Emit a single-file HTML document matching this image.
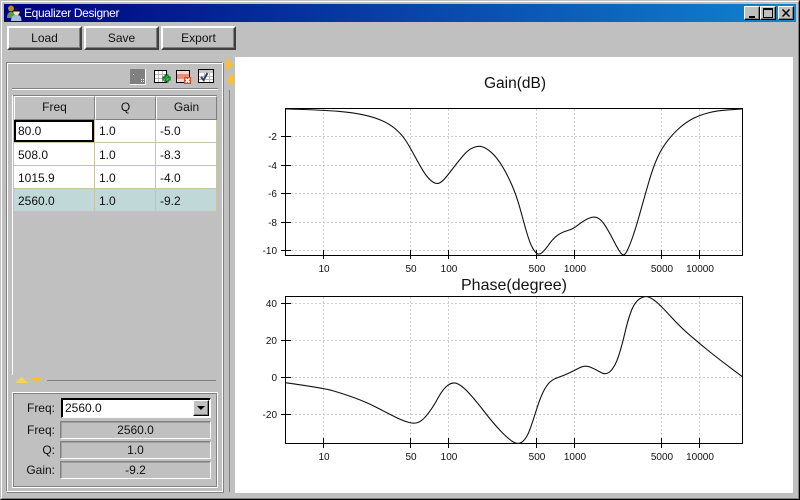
<!DOCTYPE html>
<html><head><meta charset="utf-8"><style>
html,body{margin:0;padding:0;background:#c0c0c0}
#w{position:relative;width:800px;height:500px;overflow:hidden;background:#c0c0c0;font:12px "Liberation Sans",sans-serif;color:#111}
#w div{position:absolute;box-sizing:border-box}
.btn{background:#c0c0c0;border:2px solid;border-color:#fff #404040 #404040 #fff;box-shadow:inset -1px -1px 0 #808080;text-align:center;line-height:20px}
.wb{background:#c0c0c0;border:1px solid;border-color:#fff #000 #000 #fff;box-shadow:inset -1px -1px 0 #808080}
.h{background:#c0c0c0;border:1px solid;border-color:#fff #808080 #808080 #fff;text-align:center;line-height:21px;top:96px;height:24px}
.c{height:22px;line-height:24px;padding-left:4px;background:#fff}
.sel{background:#c0d8d8}
.l{left:12px;width:43px;text-align:right;height:18px;line-height:18px}
.f{left:60px;width:151px;height:18px;line-height:17px;text-align:center;border:1px solid;border-color:#808080 #fff #fff #808080;box-shadow:inset 1px 1px 0 #a0a0a0}
</style></head><body><div id="w">
<div style="left:0;top:0;width:800px;height:500px;border:1px solid;border-color:#c0c0c0 #000 #000 #c0c0c0"></div>
<div style="left:1px;top:1px;width:798px;height:498px;border:1px solid;border-color:#fff #808080 #808080 #fff"></div>
<div style="left:4px;top:4px;width:792px;height:18px;background:linear-gradient(90deg,#000080,#1084d0);color:#fff;line-height:18px;padding-left:20px;letter-spacing:-0.35px">Equalizer Designer</div>
<svg style="position:absolute;left:6px;top:4px" width="16" height="17"><circle cx="5" cy="4.500" r="3" fill="#b08a20"/><path d="M1 14c0-5 2-6 4-6s4 1 4 6z" fill="#5c9a38"/><circle cx="10.500" cy="8" r="3.200" fill="#f4e0c8"/><path d="M7 7.500c0-3.500 7-3.500 7 0z" fill="#101018"/><path d="M5 17c0-5 2.500-6 5.500-6s5 1 5 6z" fill="#a4bcd8"/></svg>
<div class="wb" style="left:744px;top:6px;width:16px;height:14px"><div style="left:4px;top:9px;width:6px;height:2px;background:#000"></div></div>
<div class="wb" style="left:760px;top:6px;width:16px;height:14px"><div style="left:2px;top:1px;width:10px;height:10px;border:1px solid #000;border-top-width:2px"></div></div>
<div class="wb" style="left:778px;top:6px;width:16px;height:14px"><svg style="position:absolute;left:3px;top:2px" width="9" height="9"><path d="M0.500 0.500L7.500 7.500M7.500 0.500L0.500 7.500" stroke="#000" stroke-width="1.500"/></svg></div>

<div class="btn" style="left:7px;top:26px;width:75px;height:24px">Load</div>
<div class="btn" style="left:84px;top:26px;width:75px;height:24px">Save</div>
<div class="btn" style="left:161px;top:26px;width:75px;height:24px">Export</div>

<div style="left:6px;top:62px;width:217px;height:430px;border:1px solid;border-color:#808080 #fff #fff #808080;box-shadow:1px 1px 0 #808080,inset 1px 1px 0 #fff"></div>

<svg style="position:absolute;left:128px;top:66px" width="66" height="20" shape-rendering="crispEdges">
<rect x="2" y="3" width="15" height="15" fill="#808080"/><path d="M17.500 3v15.500H2" fill="none" stroke="#fff"/><rect x="5" y="8" width="1" height="1" fill="#fff"/><rect x="13" y="13" width="1" height="1" fill="#fff"/><rect x="15" y="15" width="1" height="1" fill="#fff"/><rect x="13" y="15" width="1" height="1" fill="#fff"/><rect x="15" y="13" width="1" height="1" fill="#fff"/>
<rect x="26.500" y="4.500" width="12" height="12" fill="#fff" stroke="#000"/><path d="M27 8.500h11M27 12.500h11M30.500 5v11M34.500 5v11" stroke="#bbb"/>
<path d="M35 11h2v-2h2v2h2v2h-2v2h-2v-2h-2z" fill="#10b030"/><path d="M35 11h2v-2h3v2h2v3h-2v2h-3v-2h-2z" fill="none" stroke="#005010"/>
<rect x="48.500" y="4.500" width="13" height="12" fill="#f4d8d0" stroke="#000"/><rect x="49" y="8" width="12" height="5" fill="#e89080"/>
<rect x="56" y="11" width="7" height="7" fill="#e84020"/><path d="M57.500 12.500l4 4M61.500 12.500l-4 4" stroke="#fff" stroke-width="1.600" shape-rendering="auto"/>
</svg>
<svg style="position:absolute;left:196px;top:66px" width="20" height="20" shape-rendering="crispEdges"><rect x="2.500" y="3.500" width="15" height="13" fill="#fff" stroke="#000"/><rect x="3" y="4" width="14" height="3" fill="#c8c8c8"/><path d="M3 10.500h14M3 13.500h14M8.500 7v9M13.500 7v9" stroke="#bbb"/><path d="M5 11l2.500 3 4-7" fill="none" stroke="#304060" stroke-width="2" shape-rendering="auto"/></svg>

<div style="left:12px;top:88px;width:206px;height:2px;background:#808080;border-bottom:1px solid #fff"></div>
<div style="left:12px;top:95px;width:1px;height:280px;background:#fff"></div>
<div style="left:13px;top:95px;width:204px;height:1px;background:#808080"></div>

<div class="h" style="left:14px;width:81px">Freq</div>
<div class="h" style="left:95px;width:61px">Q</div>
<div class="h" style="left:156px;width:61px">Gain</div>
<div style="left:14px;top:120px;width:203px;height:92px;background:#c8c4a8"></div>
<div class="c" style="left:14px;top:120px;width:80px;border:2px solid #000;padding-left:2px;line-height:19px">80.0</div>
<div class="c" style="left:95px;top:120px;width:60px;line-height:23px">1.0</div><div class="c" style="left:156px;top:120px;width:60px;line-height:23px">-5.0</div>
<div class="c" style="left:14px;top:143px;width:80px">508.0</div><div class="c" style="left:95px;top:143px;width:60px">1.0</div><div class="c" style="left:156px;top:143px;width:60px">-8.3</div>
<div class="c" style="left:14px;top:166px;width:80px">1015.9</div><div class="c" style="left:95px;top:166px;width:60px">1.0</div><div class="c" style="left:156px;top:166px;width:60px">-4.0</div>
<div class="c sel" style="left:14px;top:189px;width:80px">2560.0</div><div class="c sel" style="left:95px;top:189px;width:60px">1.0</div><div class="c sel" style="left:156px;top:189px;width:60px">-9.2</div>

<svg style="position:absolute;left:14px;top:376px" width="32" height="8"><path d="M1 7L7.500 1 14 7z" fill="#ffd060"/><path d="M15 1h14l-7 6z" fill="#f0c040"/></svg>
<div style="left:47px;top:380px;width:169px;height:1px;background:#808080"></div>

<div style="left:12px;top:392px;width:206px;height:96px;border:1px solid;border-color:#fff;box-shadow:inset 1px 1px 0 #808080,inset -1px -1px 0 #808080"></div>
<div class="l" style="top:399px">Freq:</div>
<div style="left:61px;top:398px;width:150px;height:20px;background:#fff;border:1px solid;border-color:#000 #fff #fff #000;box-shadow:inset 1px 1px 0 #000;line-height:19px;padding-left:3px">2560.0</div>
<div class="btn" style="left:193px;top:400px;width:16px;height:16px;border-width:1px;border-color:#fff #000 #000 #fff"><div style="left:3px;top:5px;width:0;height:0;border:4px solid transparent;border-top:4px solid #000;border-bottom:0"></div></div>
<div class="l" style="top:421px">Freq:</div><div class="f" style="top:421px">2560.0</div>
<div class="l" style="top:441px">Q:</div><div class="f" style="top:441px">1.0</div>
<div class="l" style="top:461px">Gain:</div><div class="f" style="top:461px">-9.2</div>

<svg style="position:absolute;left:225px;top:57px" width="9" height="30"><path d="M1 1L8 7.500 1 14z" fill="#f8c038"/><path d="M8 16L1 23 8 29z" fill="#f8c038"/></svg>
<div style="left:229px;top:90px;width:1px;height:402px;background:#808080"></div>

<div style="left:235px;top:57px;width:558px;height:436px;background:#fff"></div>

<svg style="position:absolute;left:0;top:0" width="800" height="500" font-family="'Liberation Sans',sans-serif">
<text x="515" y="88" font-size="15.500" text-anchor="middle" textLength="62" fill="#111">Gain(dB)</text>
<text x="514" y="290" font-size="16" text-anchor="middle" textLength="106" fill="#111">Phase(degree)</text>
<g stroke="#ccc" stroke-dasharray="2 2" fill="none" shape-rendering="crispEdges">
<path d="M323.500 109V250M410.500 109V250M448.500 109V250M536.500 109V250M574.500 109V250M661.500 109V250M699.500 109V250"/>
<path d="M291 136.500H742M291 165.500H742M291 193.500H742M291 222.500H742M291 250.500H742"/>
<path d="M323.500 297V438M410.500 297V438M448.500 297V438M536.500 297V438M574.500 297V438M661.500 297V438M699.500 297V438"/>
<path d="M291 303.500H742M291 340.500H742M291 377.500H742M291 414.500H742"/>
</g>
<g stroke="#000" fill="none" shape-rendering="crispEdges">
<rect x="285.500" y="108.500" width="457" height="147"/>
<rect x="285.500" y="296.500" width="457" height="147"/>
<path d="M281 136.500h10M281 165.500h10M281 193.500h10M281 222.500h10M281 250.500h10"/>
<path d="M323.500 250v9M410.500 250v9M448.500 250v9M536.500 250v9M574.500 250v9M661.500 250v9M699.500 250v9"/>
<path d="M281 303.500h10M281 340.500h10M281 377.500h10M281 414.500h10"/>
<path d="M323.500 438v10M410.500 438v10M448.500 438v10M536.500 438v10M574.500 438v10M661.500 438v10M699.500 438v10"/>
</g>
<g fill="none" stroke="#111" stroke-width="1.100" stroke-linejoin="round">
<path d="M285.300 109Q323.300 110 338.300 111.350Q353.300 112.700 363.300 114.850Q373.300 117 381.650 120.500Q390 124 396.650 130Q403.300 136 408.300 144.650Q413.300 153.300 418.300 162.500Q423.300 171.700 426.650 176Q430 180.300 433.500 182.400Q437 184.500 440.150 182.600Q443.300 180.700 447.500 175.350Q451.700 170 455.850 164.650Q460 159.300 464.150 154.500Q468.300 149.700 473.300 147.600Q478.300 145.500 482.500 146.900Q486.700 148.300 491.700 152.800Q496.700 157.300 501.700 165.300Q506.700 173.300 511.700 184.650Q516.700 196 520.850 211.350Q525 226.700 527.500 235Q530 243.300 532.500 247.800Q535 252.300 537.150 253.650Q539.300 255 542.150 252.500Q545 250 549.150 244.150Q553.300 238.300 557.500 235.300Q561.700 232.300 567.500 230.650Q573.300 229 578.300 224.850Q583.300 220.700 588.650 218.350Q594 216 597.850 218Q601.700 220 605.850 226.650Q610 233.300 614.150 241.650Q618.300 250 621.150 253.500Q624 257 627 251Q630 245 633.350 235Q636.700 225 640.850 210Q645 195 649.150 180.850Q653.300 166.700 657.500 157.500Q661.700 148.300 667.500 140.800Q673.300 133.300 680 127.500Q686.700 121.700 693.350 118.350Q700 115 708.350 112.850Q716.700 110.700 729.500 109.850L742.300 109"/>
<path d="M285.300 382.700Q323.300 388 333.300 390.850Q343.300 393.700 355 398Q366.700 402.300 376.700 407.500Q386.700 412.700 395 416.850Q403.300 421 409.150 422.500Q415 424 419.150 422Q423.300 420 428.300 413.350Q433.300 406.700 438.300 397.500Q443.300 388.300 448.300 384.900Q453.300 381.500 458.300 384.100Q463.300 386.700 470 394.200Q476.700 401.700 485 412.500Q493.300 423.300 500.800 431.150Q508.300 439 513.300 442Q518.300 445 522.500 441.650Q526.700 438.300 530 429.150Q533.300 420 536.650 409.150Q540 398.300 543.350 391.650Q546.700 385 550 382Q553.300 379 558.300 377.350Q563.300 375.700 568.300 373.350Q573.300 371 579.150 368Q585 365 590 367Q595 369 600.500 372.250Q606 375.500 610.500 371.100Q615 366.700 618.350 356.700Q621.700 346.700 625 332.500Q628.300 318.300 631.650 310Q635 301.700 640 298.600Q645 295.500 649.150 297.250Q653.300 299 658.300 303.650Q663.300 308.300 671.650 317.500Q680 326.700 690 335.350Q700 344 710 352Q720 360 731.150 368.350L742.300 376.700"/>
</g>
<g font-size="10" fill="#111" text-anchor="end">
<text x="277" y="140">-2</text><text x="277" y="169">-4</text><text x="277" y="197">-6</text><text x="277" y="226">-8</text><text x="277" y="254">-10</text>
<text x="277" y="307">40</text><text x="277" y="344">20</text><text x="277" y="381">0</text><text x="277" y="418">-20</text>
</g>
<g font-size="10" fill="#111" text-anchor="middle">
<text x="324" y="272">10</text><text x="411" y="272">50</text><text x="449" y="272">100</text><text x="537" y="272">500</text><text x="575" y="272">1000</text><text x="662" y="272">5000</text><text x="700" y="272">10000</text>
<text x="324" y="460">10</text><text x="411" y="460">50</text><text x="449" y="460">100</text><text x="537" y="460">500</text><text x="575" y="460">1000</text><text x="662" y="460">5000</text><text x="700" y="460">10000</text>
</g>
</svg>
</div></body></html>
